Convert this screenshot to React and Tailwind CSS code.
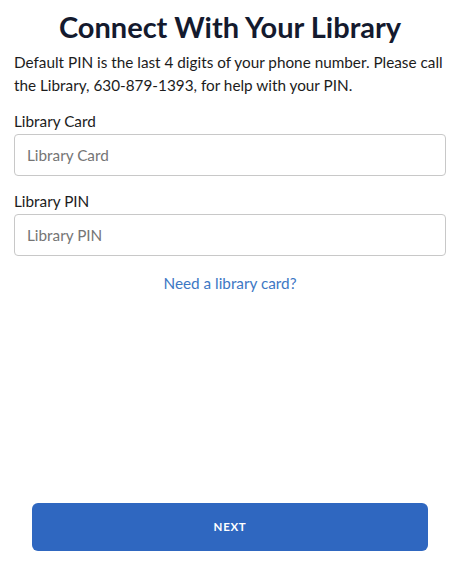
import { useState } from 'react';

const font = { fontFamily: 'Lato, "Noto Sans", sans-serif' };

function Field({ label, value, onChange }) {
  return (
    <div className="mb-[14px]">
      <label className="block text-[15.3px] leading-[22px] text-[#1c1c1c] mb-[2px]">{label}</label>
      <input
        value={value}
        onChange={(e) => onChange(e.target.value)}
        placeholder={label}
        className="block w-full h-[42px] px-[12px] text-[15.3px] text-[#1c1c1c] placeholder:text-[#757575] border border-[#c8c8c8] rounded-[4px] outline-none"
      />
    </div>
  );
}

export default function App() {
  const [card, setCard] = useState('');
  const [pin, setPin] = useState('');

  return (
    <div className="flex flex-col w-[460px] h-[576px] bg-white px-[14px]" style={font}>
      <h1 className="mt-[10px] text-center text-[29px] leading-[34px] font-bold text-[#141a2e]">
        Connect With Your Library
      </h1>
      <p className="mt-[7px] text-[15.3px] leading-[23px] text-[#1c1c1c]">
        Default PIN is the last 4 digits of your phone number. Please call the Library, 630-879-1393, for help with your PIN.
      </p>
      <div className="mt-[13px]">
        <Field label="Library Card" value={card} onChange={setCard} />
        <Field label="Library PIN" value={pin} onChange={setPin} />
      </div>
      <div className="text-center mt-[1px]">
        <a href="#" className="text-[15.3px] text-[#3d78c4]">Need a library card?</a>
      </div>
      <div className="flex-1" />
      <div className="px-[18px] pb-[25px]">
        <button className="w-full h-[48px] rounded-[6px] bg-[#2f67c0] text-white text-[11.5px] font-bold tracking-[0.06em]">
          NEXT
        </button>
      </div>
    </div>
  );
}
